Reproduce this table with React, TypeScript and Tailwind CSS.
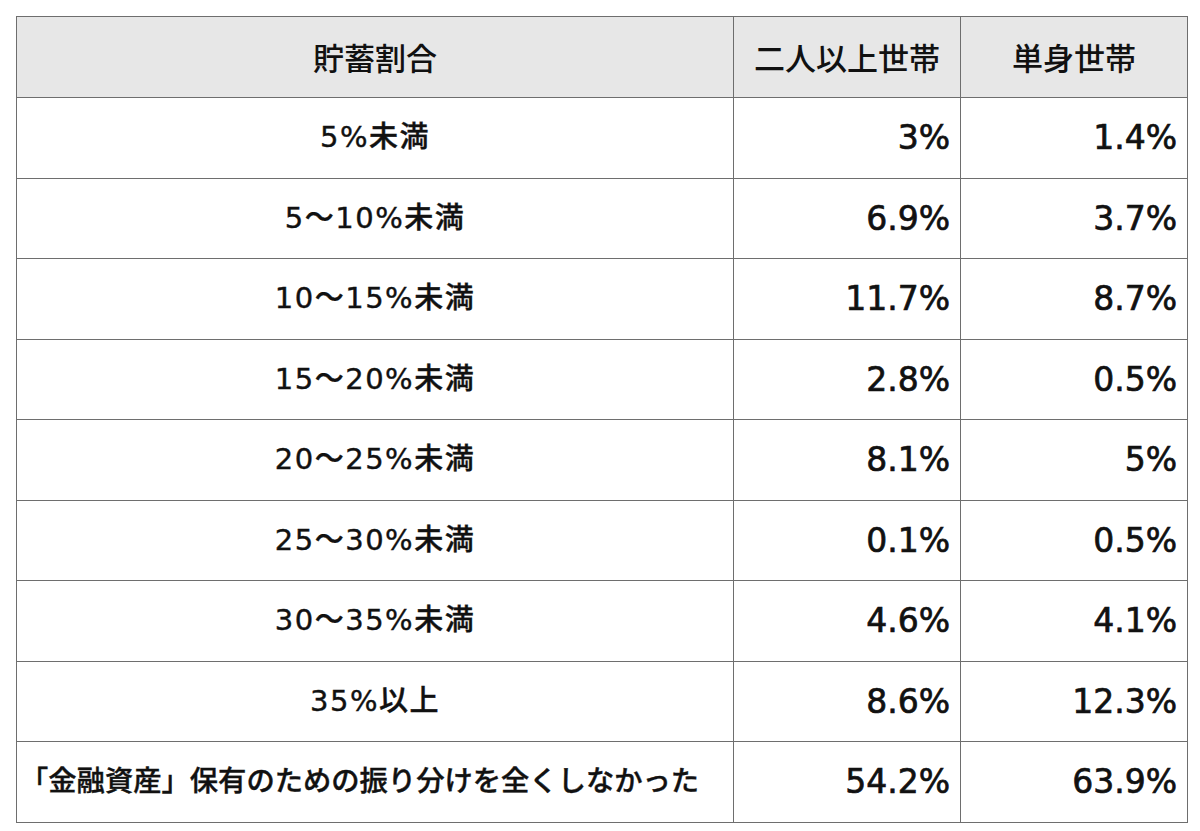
import React from "react";

const ROWS = [
  { label: "5%未満", two: "3%", single: "1.4%" },
  { label: "5〜10%未満", two: "6.9%", single: "3.7%" },
  { label: "10〜15%未満", two: "11.7%", single: "8.7%" },
  { label: "15〜20%未満", two: "2.8%", single: "0.5%" },
  { label: "20〜25%未満", two: "8.1%", single: "5%" },
  { label: "25〜30%未満", two: "0.1%", single: "0.5%" },
  { label: "30〜35%未満", two: "4.6%", single: "4.1%" },
  { label: "35%以上", two: "8.6%", single: "12.3%" },
  {
    label: "「金融資産」保有のための振り分けを全くしなかった",
    two: "54.2%",
    single: "63.9%",
    left: true,
  },
];

const cell = "border border-[#6e6e6e] p-0 align-middle";
const num = `${cell} font-['DejaVu_Sans',sans-serif] text-[33px] [-webkit-text-stroke:0.7px_#111] text-right pr-[10px]`;

const App = () => {
  return (
    <div className="w-[1200px] h-[831px] bg-white pt-4 pl-4">
      <table className="border-collapse border border-[#6e6e6e] text-[#111] table-fixed w-[1171px]">
        <colgroup>
          <col className="w-[717px]" />
          <col className="w-[227px]" />
          <col className="w-[227px]" />
        </colgroup>
        <thead>
          <tr className="h-[81px] bg-[#e7e7e7] font-['Noto_Sans_CJK_JP',sans-serif] text-[31px]">
            <th className={`${cell} text-center font-medium`}>貯蓄割合</th>
            <th className={`${cell} text-center font-medium`}>二人以上世帯</th>
            <th className={`${cell} text-center font-medium`}>単身世帯</th>
          </tr>
        </thead>
        <tbody>
          {ROWS.map((row, i) => (
            <tr key={i} className="h-[80.5px]">
              <td
                className={`${cell} font-['DejaVu_Sans','Noto_Sans_CJK_JP',sans-serif] font-medium whitespace-nowrap [-webkit-text-stroke:0.4px_#111] ${
                  row.left
                    ? "text-left pl-[3px] text-[28.3px]"
                    : "text-center text-[29px] tracking-[1.5px]"
                }`}
              >
                {row.label}
              </td>
              <td className={num}>{row.two}</td>
              <td className={num}>{row.single}</td>
            </tr>
          ))}
        </tbody>
      </table>
    </div>
  );
};

export default App;
